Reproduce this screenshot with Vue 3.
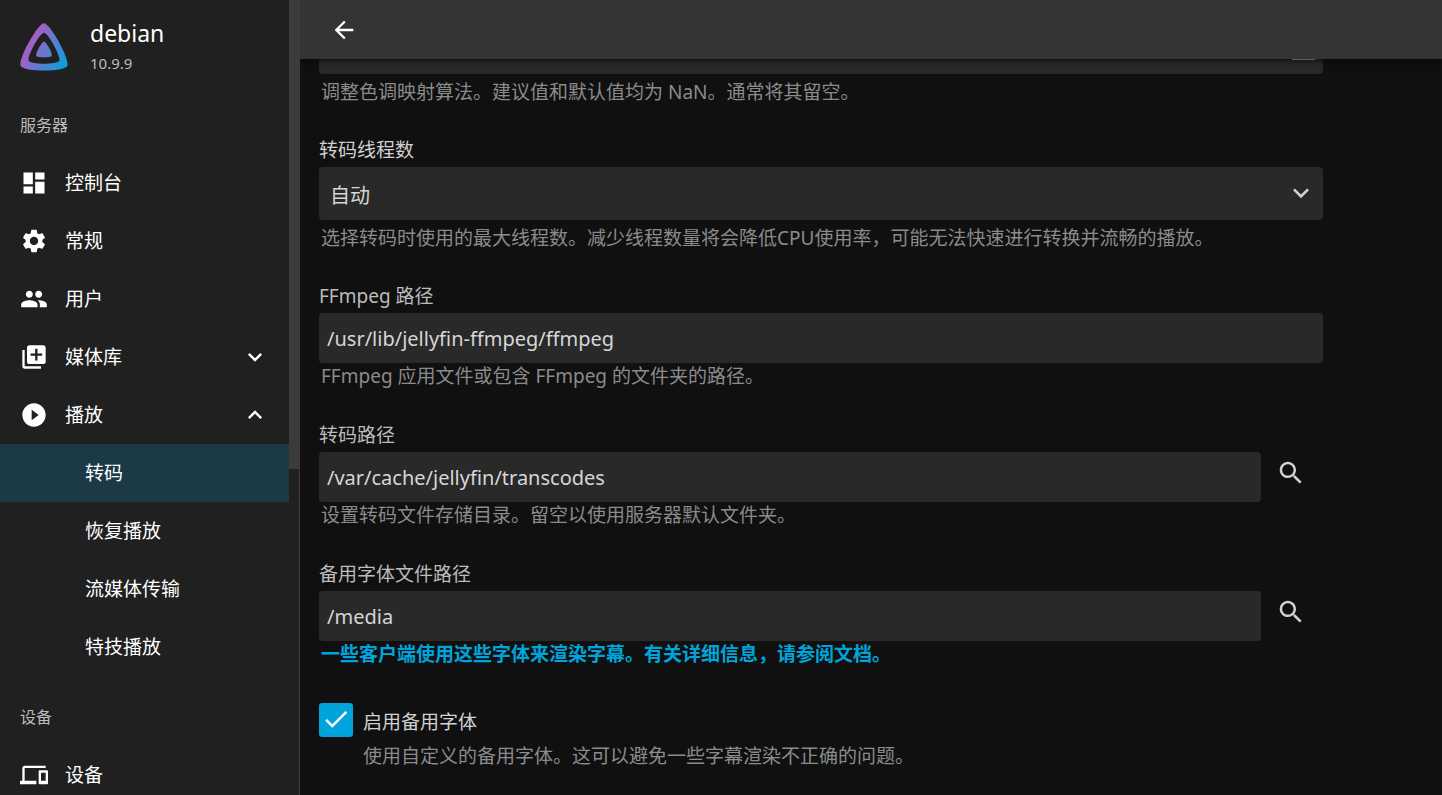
<script setup>
import { reactive } from 'vue'

const icons = {
  dashboard: 'M3 13h8V3H3v10zm0 8h8v-6H3v6zm10 0h8V11h-8v10zm0-18v6h8V3h-8z',
  settings: 'M19.14 12.94c.04-.3.06-.61.06-.94 0-.32-.02-.64-.07-.94l2.03-1.58c.18-.14.23-.41.12-.61l-1.92-3.32c-.12-.22-.37-.29-.59-.22l-2.39.96c-.5-.38-1.03-.7-1.62-.94l-.36-2.54c-.04-.24-.24-.41-.48-.41h-3.84c-.24 0-.43.17-.47.41l-.36 2.54c-.59.24-1.13.57-1.62.94l-2.39-.96c-.22-.08-.47 0-.59.22L2.74 8.87c-.12.21-.08.47.12.61l2.03 1.58c-.05.3-.09.63-.09.94s.02.64.07.94l-2.03 1.58c-.18.14-.23.41-.12.61l1.92 3.32c.12.22.37.29.59.22l2.39-.96c.5.38 1.03.7 1.62.94l.36 2.54c.05.24.24.41.48.41h3.84c.24 0 .44-.17.47-.41l.36-2.54c.59-.24 1.13-.56 1.62-.94l2.39.96c.22.08.47 0 .59-.22l1.92-3.32c.12-.22.07-.47-.12-.61l-2.01-1.58zM12 15.6c-1.98 0-3.6-1.62-3.6-3.6s1.62-3.6 3.6-3.6 3.6 1.62 3.6 3.6-1.62 3.6-3.6 3.6z',
  people: 'M16 11c1.66 0 2.99-1.34 2.99-3S17.66 5 16 5c-1.66 0-3 1.34-3 3s1.34 3 3 3zm-8 0c1.66 0 2.99-1.34 2.99-3S9.66 5 8 5C6.34 5 5 6.34 5 8s1.34 3 3 3zm0 2c-2.33 0-7 1.17-7 3.5V19h14v-2.5c0-2.33-4.67-3.5-7-3.5zm8 0c-.29 0-.62.02-.97.05 1.16.84 1.97 1.97 1.97 3.45V19h6v-2.5c0-2.33-4.67-3.5-7-3.5z',
  library: 'M4 6H2v14c0 1.1.9 2 2 2h14v-2H4V6zm16-4H8c-1.1 0-2 .9-2 2v12c0 1.1.9 2 2 2h12c1.1 0 2-.9 2-2V4c0-1.1-.9-2-2-2zm-1 9h-4v4h-2v-4H9V9h4V5h2v4h4v2z',
  play: 'M12 2C6.48 2 2 6.48 2 12s4.48 10 10 10 10-4.48 10-10S17.52 2 12 2zm-2 14.5v-9l6 4.5-6 4.5z',
  devices: 'M4 6h18V4H4c-1.1 0-2 .9-2 2v11H0v3h14v-3H4V6zm19 2h-6c-.55 0-1 .45-1 1v10c0 .55.45 1 1 1h6c.55 0 1-.45 1-1V9c0-.55-.45-1-1-1zm-1 9h-4v-7h4v7z',
  more: 'M16.59 8.59L12 13.17 7.41 8.59 6 10l6 6 6-6z',
  less: 'M12 8l-6 6 1.41 1.41L12 10.83l4.59 4.58L18 14z',
  back: 'M20 11H7.83l5.59-5.59L12 4l-8 8 8 8 1.41-1.41L7.83 13H20v-2z',
  search: 'M15.5 14h-.79l-.28-.27C15.41 12.59 16 11.11 16 9.5 16 5.91 13.09 3 9.5 3S3 5.91 3 9.5 5.91 16 9.5 16c1.61 0 3.09-.59 4.23-1.57l.27.28v.79l5 4.99L20.49 19l-4.99-5zm-6 0C7.01 14 5 11.99 5 9.5S7.01 5 9.5 5 14 7.01 14 9.5 11.99 14 9.5 14z',
  check: 'M9 16.17L4.83 12l-1.42 1.41L9 19 21 7l-1.41-1.41z',
}

const sections = [
  {
    title: '服务器',
    items: [
      { label: '控制台', icon: 'dashboard' },
      { label: '常规', icon: 'settings' },
      { label: '用户', icon: 'people' },
      { label: '媒体库', icon: 'library', toggle: 'more' },
      { label: '播放', icon: 'play', toggle: 'less' },
      { label: '转码', sub: true, active: true },
      { label: '恢复播放', sub: true },
      { label: '流媒体传输', sub: true },
      { label: '特技播放', sub: true },
    ],
  },
  {
    title: '设备',
    items: [{ label: '设备', icon: 'devices' }],
  },
]

const form = reactive({
  tonemapParam: '',
  threads: 'auto',
  ffmpegPath: '/usr/lib/jellyfin-ffmpeg/ffmpeg',
  transcodePath: '/var/cache/jellyfin/transcodes',
  fontPath: '/media',
  enableFonts: true,
})
</script>

<template>
  <div class="page">
    <aside class="drawer">
      <nav class="nav">
        <div class="server">
          <svg class="logo" viewBox="0 0 512 512" aria-hidden="true">
            <defs>
              <linearGradient id="logo-fill" x1="110" y1="213" x2="496" y2="436" gradientUnits="userSpaceOnUse">
                <stop offset="0" stop-color="#aa5cc3" />
                <stop offset="1" stop-color="#00a4dc" />
              </linearGradient>
            </defs>
            <path fill="url(#logo-fill)" d="M256 201.600c-20.400 0-86.200 119.300-76.200 139.400s142.500 19.900 152.400 0-55.700-139.400-76.200-139.400z" />
            <path fill="url(#logo-fill)" fill-rule="evenodd" d="M256 23.300C194.400 23.300-3.800 382.700 26.400 443.300s429.300 59.900 459.200 0S317.600 23.300 256 23.300zm150.500 367.500c-19.600 39.300-281.100 39.800-300.900 0S215.700 115.500 256 115.500s170.100 235.900 150.500 275.300z" />
          </svg>
          <div>
            <div class="name">debian</div>
            <div class="version">10.9.9</div>
          </div>
        </div>

        <section v-for="section in sections" :key="section.title" class="section">
          <h3>{{ section.title }}</h3>
          <a v-for="item in section.items" :key="item.label" href="#" class="item"
            :class="{ sub: item.sub, active: item.active }">
            <svg v-if="item.icon" class="icon" viewBox="0 0 24 24"><path :d="icons[item.icon]" /></svg>
            <span>{{ item.label }}</span>
            <svg v-if="item.toggle" class="icon toggle" viewBox="0 0 24 24"><path :d="icons[item.toggle]" /></svg>
          </a>
        </section>
      </nav>
      <div class="scrollbar"><div class="thumb"></div></div>
    </aside>

    <div class="main">
      <header class="header">
        <button type="button" class="back" aria-label="返回">
          <svg class="icon" viewBox="0 0 24 24"><path :d="icons.back" /></svg>
        </button>
      </header>

      <form class="content" @submit.prevent>
        <div class="field select-field">
          <div class="control">
            <input v-model="form.tonemapParam" class="box" type="text" aria-labelledby="tonemap-help">
            <span class="handle"></span>
          </div>
          <div id="tonemap-help" class="help">调整色调映射算法。建议值和默认值均为 NaN。通常将其留空。</div>
        </div>

        <div class="field select-field">
          <label class="label bright" for="threads">转码线程数</label>
          <div class="control">
            <select id="threads" v-model="form.threads" class="box">
              <option value="auto">自动</option>
            </select>
            <svg class="arrow" viewBox="0 0 24 24"><path :d="icons.more" /></svg>
          </div>
          <div class="help">选择转码时使用的最大线程数。减少线程数量将会降低CPU使用率，可能无法快速进行转换并流畅的播放。</div>
        </div>

        <div class="field">
          <label class="label" for="ffmpeg">FFmpeg 路径</label>
          <input id="ffmpeg" v-model="form.ffmpegPath" class="box" type="text">
          <div class="help">FFmpeg 应用文件或包含 FFmpeg 的文件夹的路径。</div>
        </div>

        <div class="field">
          <label class="label" for="transcode">转码路径</label>
          <div class="row">
            <input id="transcode" v-model="form.transcodePath" class="box" type="text">
            <button type="button" class="search" aria-label="搜索">
              <svg viewBox="0 0 24 24"><path :d="icons.search" /></svg>
            </button>
          </div>
          <div class="help">设置转码文件存储目录。留空以使用服务器默认文件夹。</div>
        </div>

        <div class="field">
          <label class="label" for="fonts">备用字体文件路径</label>
          <div class="row">
            <input id="fonts" v-model="form.fontPath" class="box" type="text">
            <button type="button" class="search" aria-label="搜索">
              <svg viewBox="0 0 24 24"><path :d="icons.search" /></svg>
            </button>
          </div>
          <div class="help"><a href="#">一些客户端使用这些字体来渲染字幕。有关详细信息，请参阅文档。</a></div>
        </div>

        <div class="checkbox">
          <label for="enable-fonts">
            <span class="tick">
              <input id="enable-fonts" v-model="form.enableFonts" type="checkbox">
              <svg v-if="form.enableFonts" viewBox="0 0 24 24"><path :d="icons.check" /></svg>
            </span>
            <span class="caption">启用备用字体</span>
          </label>
          <div class="help">使用自定义的备用字体。这可以避免一些字幕渲染不正确的问题。</div>
        </div>
      </form>
    </div>
  </div>
</template>

<style>
body {
  margin: 0;
  background: #101010;
}
</style>

<style scoped>
.page {
  display: flex;
  height: 100vh;
  overflow: hidden;
  background: #101010;
  color: #d1d1d1;
  font-family: "Noto Sans", "Noto Sans CJK SC", sans-serif;
  font-size: 19px;
  line-height: 26px;
}

.page * {
  box-sizing: border-box;
}

svg {
  display: block;
  flex: none;
  fill: currentColor;
}

.icon {
  width: 28px;
  height: 28px;
}

.drawer {
  position: relative;
  z-index: 2;
  display: flex;
  flex: none;
  width: 300px;
  background: #202020;
  border-right: 1px solid #3b3b3b;
}

.nav {
  flex: 1;
  overflow: hidden;
  color: #fff;
}

.scrollbar {
  width: 10px;
}

.thumb {
  height: 59%;
  background: #3b3b3b;
}

.server {
  display: flex;
  align-items: center;
  gap: 20px;
  height: 84px;
  padding: 10px 18px 0;
}

.logo {
  width: 52px;
  height: 52px;
}

.name {
  font-size: 23px;
  line-height: 32px;
}

.version {
  font-size: 15px;
  line-height: 28px;
  color: #bcbcbc;
}

.section {
  padding-top: 12px;
}

.section h3 {
  margin: 0;
  padding-left: 20px;
  font-size: 16px;
  font-weight: 400;
  line-height: 58px;
  color: #bcbcbc;
}

.item {
  display: flex;
  align-items: center;
  gap: 17px;
  height: 58px;
  padding: 0 20px;
  color: #fff;
  text-decoration: none;
}

.item.sub {
  padding-left: 85px;
}

.item.active {
  background: #1b3a45;
}

.toggle {
  margin-left: auto;
}

.main {
  flex: 1;
  min-width: 0;
}

.header {
  position: relative;
  z-index: 1;
  display: flex;
  align-items: center;
  height: 59px;
  padding: 0 30px;
  background: #343434;
  box-shadow: 0 0 8px #000;
}

button {
  border: 0;
  padding: 0;
  background: none;
  color: inherit;
}

.back {
  color: #fff;
}

/* the form is scrolled part of the way under the header */
.content {
  max-width: 1042px;
  margin-top: -38px;
  padding: 0 19px;
}

.field {
  margin-bottom: 33px;
}

.label {
  display: block;
  margin-bottom: 4px;
  color: #bcbcbc;
}

.label.bright {
  color: #d1d1d1;
}

.box {
  display: block;
  width: 100%;
  height: 50px;
  margin: 0;
  padding: 0 8px;
  border: 0;
  border-radius: 4px;
  outline: 0;
  background: #292929;
  color: #d6d6d6;
  font-family: inherit;
  font-size: 20px;
  appearance: none;
}

.help {
  padding-left: 2px;
  color: #8b8b8b;
}

.help a {
  color: #00a4dc;
  font-weight: 700;
  text-decoration: none;
}

.select-field {
  margin-bottom: 32px;
}

.select-field .box {
  height: 53px;
  padding: 3px 11px 0;
}

.select-field .help {
  margin-top: 5px;
}

.control {
  position: relative;
}

.arrow {
  position: absolute;
  top: 10px;
  right: 6px;
  width: 32px;
  height: 32px;
  pointer-events: none;
}

.handle {
  position: absolute;
  right: 8px;
  bottom: 14px;
  width: 23px;
  height: 2px;
  background: #b5b5b5;
}

.row {
  display: flex;
  align-items: flex-start;
}

.row .box {
  flex: 1;
}

.search {
  display: flex;
  align-items: center;
  justify-content: center;
  width: 60px;
  height: 42px;
  margin-right: 2px;
}

.search svg {
  width: 30px;
  height: 30px;
}

.checkbox {
  padding-top: 3px;
}

.checkbox label {
  display: flex;
  align-items: center;
  gap: 10px;
}

.caption {
  padding-top: 3px;
}

.tick {
  position: relative;
}

.tick input {
  display: block;
  width: 34px;
  height: 34px;
  margin: 0;
  border: 2px solid #00a4dc;
  border-radius: 3px;
  background: #101010;
  appearance: none;
}

.tick input:checked {
  background: #00a4dc;
}

.tick svg {
  position: absolute;
  top: 1px;
  left: 2px;
  width: 30px;
  height: 30px;
  color: #fff;
  pointer-events: none;
}

.checkbox .help {
  margin-top: 6px;
  padding-left: 44px;
}
</style>
